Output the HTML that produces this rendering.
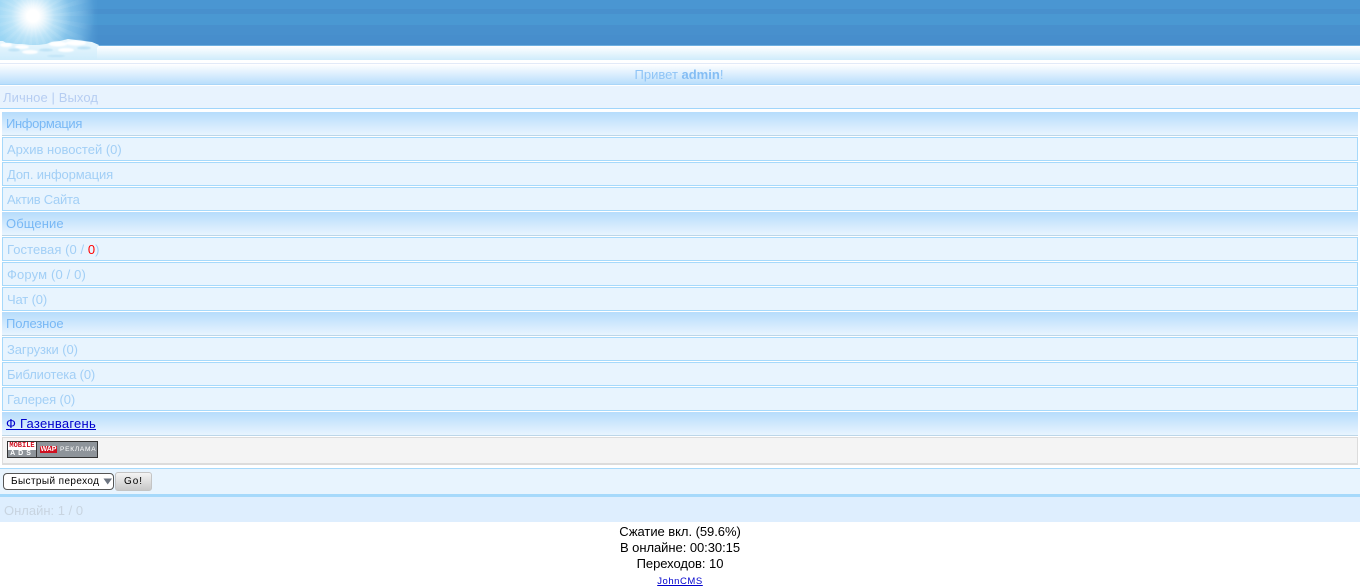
<!DOCTYPE html>
<html><head><meta charset="utf-8">
<style>
html,body{margin:0;padding:0;background:#fff;width:1360px;height:587px;overflow:hidden}
body{position:relative;font-family:"Liberation Sans","DejaVu Sans",sans-serif;font-size:13px}
.a{position:absolute;box-sizing:border-box}
.t{position:absolute;white-space:nowrap;line-height:14px}
.row{left:2px;width:1356px;height:24px;background:#e8f4fe;border:1px solid #a6d9fb;color:#a2cff6;padding:5px 0 0 4px;line-height:14px;white-space:nowrap}
.head{left:2px;width:1356px;height:24px;background:linear-gradient(#b6dcfc,#e8f4fe);border-bottom:1px solid #bcd6e8;color:#78b8f5;padding:5px 0 0 4px;line-height:14px;white-space:nowrap}
</style></head><body>
<!-- header -->
<div class="a" style="left:0;top:0;width:1360px;height:45px;background:linear-gradient(#4a96d2 0 9px,#4890cd 9px 14px,#4a98d2 14px 25px,#4890cd 25px 35px,#478ecc 35px 45px)"></div>
<div class="a" style="left:0;top:45px;width:1360px;height:1px;background:#6fb0e0"></div>
<div class="a" style="left:0;top:46px;width:1360px;height:14px;background:linear-gradient(#fff,#cfecfb)"></div>
<div class="a" style="left:0;top:0;width:100px;height:46px;overflow:hidden">
<div class="a" style="left:0;top:0;width:100px;height:46px;background:linear-gradient(90deg,#8fd0f2 0,#86caee 45%,#62aade 78%,rgba(74,149,208,0) 98%)"></div>
<div class="a" style="left:-67px;top:-84px;width:200px;height:200px;border-radius:50%;background:repeating-conic-gradient(rgba(255,255,255,.13) 0 6deg,rgba(255,255,255,0) 6deg 14deg);-webkit-mask-image:radial-gradient(circle,#000 20px,transparent 62px);mask-image:radial-gradient(circle,#000 20px,transparent 62px)"></div>
<div class="a" style="left:-67px;top:-84px;width:200px;height:200px;background:radial-gradient(circle,#fff 0,#fff 6px,rgba(255,255,255,.85) 11px,rgba(215,240,252,.65) 22px,rgba(180,225,248,.3) 38px,rgba(160,215,245,0) 62px)"></div>
</div>
<svg class="a" style="left:0;top:38px" width="100" height="22" viewBox="0 0 100 22">
<defs><linearGradient id="c" x1="0" y1="0" x2="0" y2="1"><stop offset="0" stop-color="#eef9fe"/><stop offset="1" stop-color="#cfecfb"/></linearGradient>
<filter id="b"><feGaussianBlur stdDeviation=".8"/></filter></defs>
<path d="M0 3 L3 3 L6 5 L10 5 L16 6 L22 6 L30 7 L38 7 L46 6 L52 4 L60 3 L68 1 L76 2 L84 3 L92 4 L99 7 L97 10 L97 22 L0 22 Z" fill="url(#c)"/>
<g fill="#fff" filter="url(#b)"><ellipse cx="6" cy="7" rx="6" ry="2"/><ellipse cx="22" cy="9" rx="7" ry="2"/><ellipse cx="58" cy="6" rx="9" ry="2.5"/><ellipse cx="76" cy="5" rx="10" ry="2.5"/><ellipse cx="66" cy="12" rx="8" ry="2"/><ellipse cx="30" cy="14" rx="8" ry="2"/></g>
<g fill="#bfe3f6" filter="url(#b)"><ellipse cx="14" cy="12" rx="6" ry="1.5"/><ellipse cx="46" cy="12" rx="7" ry="1.5"/><ellipse cx="84" cy="10" rx="7" ry="1.5"/><ellipse cx="56" cy="18" rx="9" ry="1"/></g>
</svg>
<!-- greeting -->
<div class="a" style="left:0;top:63px;width:1360px;height:1px;background:#e2eaf8"></div>
<div class="a" style="left:0;top:64px;width:1360px;height:20px;background:linear-gradient(#fff,#b9defc)"></div>
<div class="a" style="left:0;top:84px;width:1360px;height:1px;background:#a9d5f8"></div>
<div class="t" style="left:0;top:68px;width:1358px;text-align:center;color:#8fc4f6">Привет <b style="color:#84bdf4">admin</b>!</div>
<!-- personal -->
<div class="a" style="left:0;top:86px;width:1360px;height:23px;background:#e8f3fe;border-bottom:1px solid #a0d5fb"></div>
<div class="t" style="left:3px;top:91px;color:#b6cdf2;letter-spacing:.1px">Личное | Выход</div>

<div class="a head" style="top:112px;letter-spacing:-.36px">Информация</div>
<div class="a row" style="top:137px">Архив новостей (0)</div>
<div class="a row" style="top:162px;letter-spacing:-.13px">Доп. информация</div>
<div class="a row" style="top:187px;letter-spacing:-.25px">Актив Сайта</div>
<div class="a head" style="top:212px;letter-spacing:.1px">Общение</div>
<div class="a row" style="top:237px;letter-spacing:.06px">Гостевая (0 / <span style="color:#f00">0</span>)</div>
<div class="a row" style="top:262px;letter-spacing:.15px">Форум (0 / 0)</div>
<div class="a row" style="top:287px;letter-spacing:-.15px">Чат (0)</div>
<div class="a head" style="top:312px;letter-spacing:-.12px">Полезное</div>
<div class="a row" style="top:337px;letter-spacing:-.08px">Загрузки (0)</div>
<div class="a row" style="top:362px;letter-spacing:-.15px">Библиотека (0)</div>
<div class="a row" style="top:387px;letter-spacing:-.12px">Галерея (0)</div>
<div class="a head" style="top:412px;color:#0000cc;text-decoration:underline;letter-spacing:.25px"><span>Ф Газенвагень</span></div>
<!-- ads -->
<div class="a" style="left:2px;top:437px;width:1356px;height:28px;background:#f4f4f4;border:1px solid #dcdcdc;border-width:1px 1px 2px 1px"></div>
<div class="a" style="left:7px;top:441px;width:91px;height:17px;background:#333"></div>
<div class="a" style="left:8px;top:442px;width:28px;height:8px;background:#fff;color:#d01020;font:bold 7px/8px 'Liberation Mono',monospace;text-align:center;overflow:hidden">MOBILE</div>
<div class="a" style="left:8px;top:450px;width:28px;height:7px;background:#8e949a;color:#fff;font:bold 7px/7px 'Liberation Sans',sans-serif;letter-spacing:3px;text-align:center;overflow:hidden">ADS</div>
<div class="a" style="left:37px;top:442px;width:60px;height:15px;background:#8e949a"></div>
<div class="a" style="left:40px;top:446px;width:17px;height:7px;background:#d01020;color:#fff;font:bold 7px/7px 'Liberation Sans',sans-serif;text-align:center;overflow:hidden">WAP</div>
<div class="a" style="left:60px;top:445px;width:37px;height:9px;color:#fff;font:6.5px/9px 'Liberation Sans',sans-serif;letter-spacing:.8px;white-space:nowrap;overflow:hidden">РЕКЛАМА</div>
<!-- form -->
<div class="a" style="left:0;top:468px;width:1360px;height:26px;background:#e8f4fe;border-top:1px solid #a6d9fb"></div>
<div class="a" style="left:3px;top:473px;width:111px;height:17px;background:#fff;border:1px solid #555;border-radius:4px;font-size:10px;letter-spacing:.4px;line-height:16px;padding-left:7px;color:#000;white-space:nowrap;overflow:hidden">Быстрый переход</div>
<svg class="a" style="left:103px;top:478px" width="10" height="7"><path d="M0.5 0.5H9L4.7 6.5Z" fill="#6c7480"/></svg>
<div class="a" style="left:115px;top:472px;width:37px;height:19px;background:linear-gradient(#f4f4f4,#c8c8c8);border:1px solid #c4c4c4;border-radius:3px;font-size:10px;letter-spacing:1px;line-height:18px;text-align:center;color:#000">Go!</div>
<!-- online -->
<div class="a" style="left:0;top:494px;width:1360px;height:3px;background:#a6d9fb"></div>
<div class="a" style="left:0;top:497px;width:1360px;height:25px;background:#deeefe"></div>
<div class="t" style="left:4px;top:504px;color:#c8d4e0">Онлайн: 1 / 0</div>
<!-- footer -->
<div class="t" style="left:0;top:524px;width:1360px;text-align:center;color:#000;line-height:16px;letter-spacing:-.05px">Сжатие вкл. (59.6%)<br>В онлайне: 00:30:15<br>Переходов: 10</div>
<div class="t" style="left:0;top:575px;width:1360px;text-align:center;font-size:9.5px;letter-spacing:.55px;color:#0000cc;text-decoration:underline">JohnCMS</div>
</body></html>
